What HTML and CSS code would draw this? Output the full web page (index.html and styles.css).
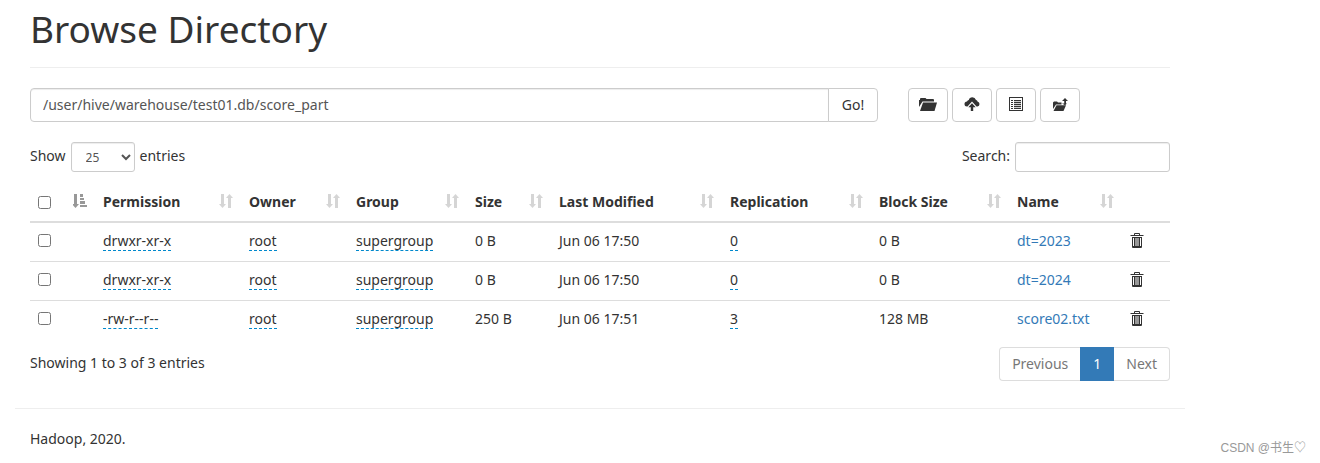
FILE: index.html
```
<!DOCTYPE html>
<html lang="en">
<head>
    <meta charset="UTF-8">
    <meta name="viewport" content="width=device-width, initial-scale=1.0">
    <title>Browsing HDFS</title>
    <link rel="stylesheet" href="styles.css">
</head>
<body>

    <!-- Icons -->
    <svg class="icon-defs" aria-hidden="true">
        <symbol id="icon-folder" viewBox="0 0 18 14">
            <path d="M0 10V3h1V1.500L2 1h4.500L7.500 2H14q1 0 1 1v1.500H3.500z"/>
            <path d="M4 5.500h14L15.500 14H1z"/>
        </symbol>
        <symbol id="icon-upload" viewBox="0 0 16 14">
            <path d="M3 9.500Q.5 9.500 .5 7T3 4.500Q3.500 3 4.800 3Q5.500 .3 8.300 .3T12 3Q13.300 3 13.500 4.500Q15.500 5 15.500 7T13.500 9.500H12.500L8 4.500 3.500 9.500z"/>
            <path d="M8 6.300l3.700 4H9.200V14H6.800v-3.700H4.300z"/>
        </symbol>
        <symbol id="icon-list" viewBox="0 0 14 14">
            <path fill-rule="evenodd" d="M0 0h14v14H0zM1 1v12h12V1z"/>
            <path d="M2 3h2v1H2zM5 3h7v1.300H5zM2 5h2v1H2zM5 5h7v1.300H5zM2 7h2v1H2zM5 7h7v1.300H5zM2 9h2v1H2zM5 9h7v1.300H5zM2 11h2v1H2zM5 11h7v1H5z"/>
        </symbol>
        <symbol id="icon-move" viewBox="0 0 15 14">
            <path d="M0 12V5.500l1-1h3l1 1h3.500v2H3z"/>
            <path d="M3.500 8.200H13L10.500 14H.5z"/>
            <path d="M12 1l3 3H13v2.500h1L12 8.200 9 6.500h2.200V4H9z"/>
        </symbol>
        <symbol id="icon-sort" viewBox="0 0 14 14">
            <path d="M2 0h3v10h2l-3.500 4L0 10h2zM9 14h3V4h2l-3.500-4L7 4h2z"/>
        </symbol>
        <symbol id="icon-sort-asc" viewBox="0 0 14 14">
            <path d="M1 0h3v10h2l-3.500 4L-1 10h2zM7 0h3v3H7zM7 4h4v2H7zM7 7h5v3H7zM7 11h7v2H7z"/>
        </symbol>
        <symbol id="icon-trash" viewBox="0 0 14 15">
            <path fill-rule="evenodd" d="M4 2V1q0-1 1-1h4q1 0 1 1v1h3.500v1H.5V2zM5 1v1h4V1z"/>
            <path fill-rule="evenodd" d="M2 4h10v10q0 1-1 1H3q-1 0-1-1zM3 5v8h1V5zM5.500 5v8h1V5zM7.500 5v8h1V5zM10 5v8h1V5z"/>
        </symbol>
    </svg>

    <div class="container">
        <div class="page-header">
            <h1>Browse Directory</h1>
        </div>

        <div class="toolbar">
            <form class="path-form">
                <input type="text" class="form-control" id="directory" aria-label="Directory" value="/user/hive/warehouse/test01.db/score_part">
                <button type="button" class="btn">Go!</button>
            </form>
            <div class="btn-group">
                <button type="button" class="btn" title="Create Directory"><svg class="icon-folder"><use href="#icon-folder"/></svg></button>
                <button type="button" class="btn" title="Upload Files"><svg class="icon-upload"><use href="#icon-upload"/></svg></button>
                <button type="button" class="btn" title="Cut &amp; Paste"><svg class="icon-list"><use href="#icon-list"/></svg></button>
                <button type="button" class="btn" title="Parent Directory"><svg class="icon-move"><use href="#icon-move"/></svg></button>
            </div>
        </div>

        <div class="table-controls">
            <label>Show
                <select class="input-sm">
                    <option>10</option>
                    <option selected>25</option>
                    <option>50</option>
                    <option>100</option>
                </select>
                entries</label>
            <label class="search">Search: <input type="search" class="input-sm"></label>
        </div>

        <table class="table">
            <colgroup>
                <col class="col-check">
                <col class="col-permission">
                <col class="col-owner">
                <col class="col-group">
                <col class="col-size">
                <col class="col-modified">
                <col class="col-replication">
                <col class="col-block">
                <col class="col-name">
                <col class="col-trash">
            </colgroup>
            <thead>
                <tr>
                    <th><input type="checkbox" aria-label="Select all"><svg class="sort active"><use href="#icon-sort-asc"/></svg></th>
                    <th>Permission<svg class="sort"><use href="#icon-sort"/></svg></th>
                    <th>Owner<svg class="sort"><use href="#icon-sort"/></svg></th>
                    <th>Group<svg class="sort"><use href="#icon-sort"/></svg></th>
                    <th>Size<svg class="sort"><use href="#icon-sort"/></svg></th>
                    <th>Last Modified<svg class="sort"><use href="#icon-sort"/></svg></th>
                    <th>Replication<svg class="sort"><use href="#icon-sort"/></svg></th>
                    <th>Block Size<svg class="sort"><use href="#icon-sort"/></svg></th>
                    <th>Name<svg class="sort"><use href="#icon-sort"/></svg></th>
                    <th></th>
                </tr>
            </thead>
            <tbody>
                <tr>
                    <td><input type="checkbox" aria-label="Select dt=2023"></td>
                    <td><span class="editable">drwxr-xr-x</span></td>
                    <td><span class="editable">root</span></td>
                    <td><span class="editable">supergroup</span></td>
                    <td>0 B</td>
                    <td>Jun 06 17:50</td>
                    <td><span class="editable">0</span></td>
                    <td>0 B</td>
                    <td><a href="#">dt=2023</a></td>
                    <td><button type="button" class="trash" title="Delete"><svg><use href="#icon-trash"/></svg></button></td>
                </tr>
                <tr>
                    <td><input type="checkbox" aria-label="Select dt=2024"></td>
                    <td><span class="editable">drwxr-xr-x</span></td>
                    <td><span class="editable">root</span></td>
                    <td><span class="editable">supergroup</span></td>
                    <td>0 B</td>
                    <td>Jun 06 17:50</td>
                    <td><span class="editable">0</span></td>
                    <td>0 B</td>
                    <td><a href="#">dt=2024</a></td>
                    <td><button type="button" class="trash" title="Delete"><svg><use href="#icon-trash"/></svg></button></td>
                </tr>
                <tr>
                    <td><input type="checkbox" aria-label="Select score02.txt"></td>
                    <td><span class="editable">-rw-r--r--</span></td>
                    <td><span class="editable">root</span></td>
                    <td><span class="editable">supergroup</span></td>
                    <td>250 B</td>
                    <td>Jun 06 17:51</td>
                    <td><span class="editable">3</span></td>
                    <td>128 MB</td>
                    <td><a href="#">score02.txt</a></td>
                    <td><button type="button" class="trash" title="Delete"><svg><use href="#icon-trash"/></svg></button></td>
                </tr>
            </tbody>
        </table>

        <div class="table-footer">
            <div>Showing 1 to 3 of 3 entries</div>
            <div class="pagination">
                <a href="#">Previous</a>
                <a href="#" class="current">1</a>
                <a href="#">Next</a>
            </div>
        </div>
    </div>

    <footer class="footer">
        <p>Hadoop, 2020.</p>
    </footer>

    <div class="watermark">CSDN @书生♡</div>

</body>
</html>
```
FILE: styles.css
```
* {
    box-sizing: border-box;
}

body {
    position: relative;
    margin: 0;
    font-family: 'Noto Sans', 'Noto Sans CJK SC', sans-serif;
    font-size: 14px;
    line-height: 20px;
    color: #333;
    background: white;
}

.icon-defs {
    display: none;
}

svg {
    fill: currentColor;
}

a {
    color: #337ab7;
    text-decoration: none;
}

.container,
.footer {
    max-width: 1170px;
    margin-left: 15px;
    padding: 0 15px;
}

.page-header {
    padding: 8px 0 18px;
    margin-bottom: 20px;
    border-bottom: 1px solid #eee;
}

h1 {
    margin: 0;
    font-size: 37px;
    font-weight: 400;
    line-height: 41px;
}

/* Path box and buttons */
.toolbar {
    display: grid;
    grid-template-columns: 848px 1fr;
    gap: 30px;
}

.path-form {
    display: flex;
}

.form-control,
.btn {
    height: 34px;
    padding: 0 12px;
    font: inherit;
    border: 1px solid #ccc;
    border-radius: 4px;
    background: white;
}

.form-control {
    flex: 1;
    min-width: 0;
    padding-bottom: 2px;
    color: #555;
    border-radius: 4px 0 0 4px;
    box-shadow: inset 0 1px 1px rgba(0, 0, 0, 0.075);
}

.btn {
    color: #333;
    cursor: pointer;
}

.path-form .btn {
    width: 50px;
    padding: 0;
    margin-left: -1px;
    border-radius: 0 4px 4px 0;
}

.btn-group {
    display: flex;
    gap: 4px;
}

.btn-group .btn {
    display: flex;
    align-items: center;
    justify-content: center;
    width: 40px;
    padding: 0 0 2px;
}

.icon-folder {
    width: 18px;
    height: 14px;
}

.icon-upload {
    width: 16px;
    height: 14px;
}

.icon-list {
    width: 14px;
    height: 14px;
}

.icon-move {
    width: 15px;
    height: 14px;
}

/* Page length and search */
.table-controls {
    display: flex;
    justify-content: space-between;
    margin: 20px 0 11px;
    line-height: 28px;
}

.table-controls label {
    display: flex;
    gap: 5px;
    height: 30px;
}

.input-sm {
    height: 30px;
    padding: 5px 10px;
    font-family: inherit;
    font-size: 12px;
    color: #555;
    border: 1px solid #ccc;
    border-radius: 3px;
    background: white;
    box-shadow: inset 0 1px 1px rgba(0, 0, 0, 0.075);
}

select.input-sm {
    width: 64px;
}

.search .input-sm {
    width: 155px;
}

/* Listing */
.table {
    width: 100%;
    table-layout: fixed;
    border-collapse: collapse;
}

.col-check { width: 65px; }
.col-permission { width: 146px; }
.col-owner { width: 107px; }
.col-group { width: 119px; }
.col-size { width: 84px; }
.col-modified { width: 171px; }
.col-replication { width: 149px; }
.col-block { width: 138px; }
.col-name { width: 113px; }
.col-trash { width: 48px; }

th,
td {
    height: 39px;
    padding: 0 8px;
    text-align: left;
    white-space: nowrap;
    border-top: 1px solid #ddd;
}

td {
    padding-bottom: 2px;
}

th {
    position: relative;
    border-top: 0;
    border-bottom: 2px solid #ddd;
}

.table input {
    display: block;
    width: 13px;
    height: 13px;
    margin: 0;
}

.sort {
    position: absolute;
    right: 8px;
    bottom: 13px;
    width: 14px;
    height: 14px;
    opacity: 0.2;
    overflow: visible;
}

.sort.active {
    opacity: 0.5;
}

.editable {
    display: inline-block;
    line-height: 19px;
    border-bottom: 1px dashed #0088cc;
}

.trash {
    display: block;
    padding: 0;
    color: #333;
    border: 0;
    background: none;
    cursor: pointer;
}

.trash svg {
    display: block;
    width: 14px;
    height: 15px;
}

.table-footer {
    display: flex;
    justify-content: space-between;
    margin-top: 8px;
    line-height: 32px;
}

.pagination {
    display: flex;
}

.pagination a {
    padding: 0 12px;
    color: #777;
    border: 1px solid #ddd;
}

.pagination a:first-child {
    border-radius: 4px 0 0 4px;
    border-right: 0;
}

.pagination a:last-child {
    border-radius: 0 4px 4px 0;
    border-left: 0;
}

.pagination .current {
    color: white;
    border-color: #337ab7;
    background: #337ab7;
}

.footer {
    margin-top: 27px;
    padding-top: 20px;
    border-top: 1px solid #eee;
}

.footer p {
    margin: 0 0 10px;
}

.watermark {
    position: absolute;
    right: 14px;
    bottom: 2px;
    font-family: 'Liberation Sans', 'Noto Sans CJK SC', sans-serif;
    font-size: 12px;
    line-height: 18px;
    color: #999;
}
```
